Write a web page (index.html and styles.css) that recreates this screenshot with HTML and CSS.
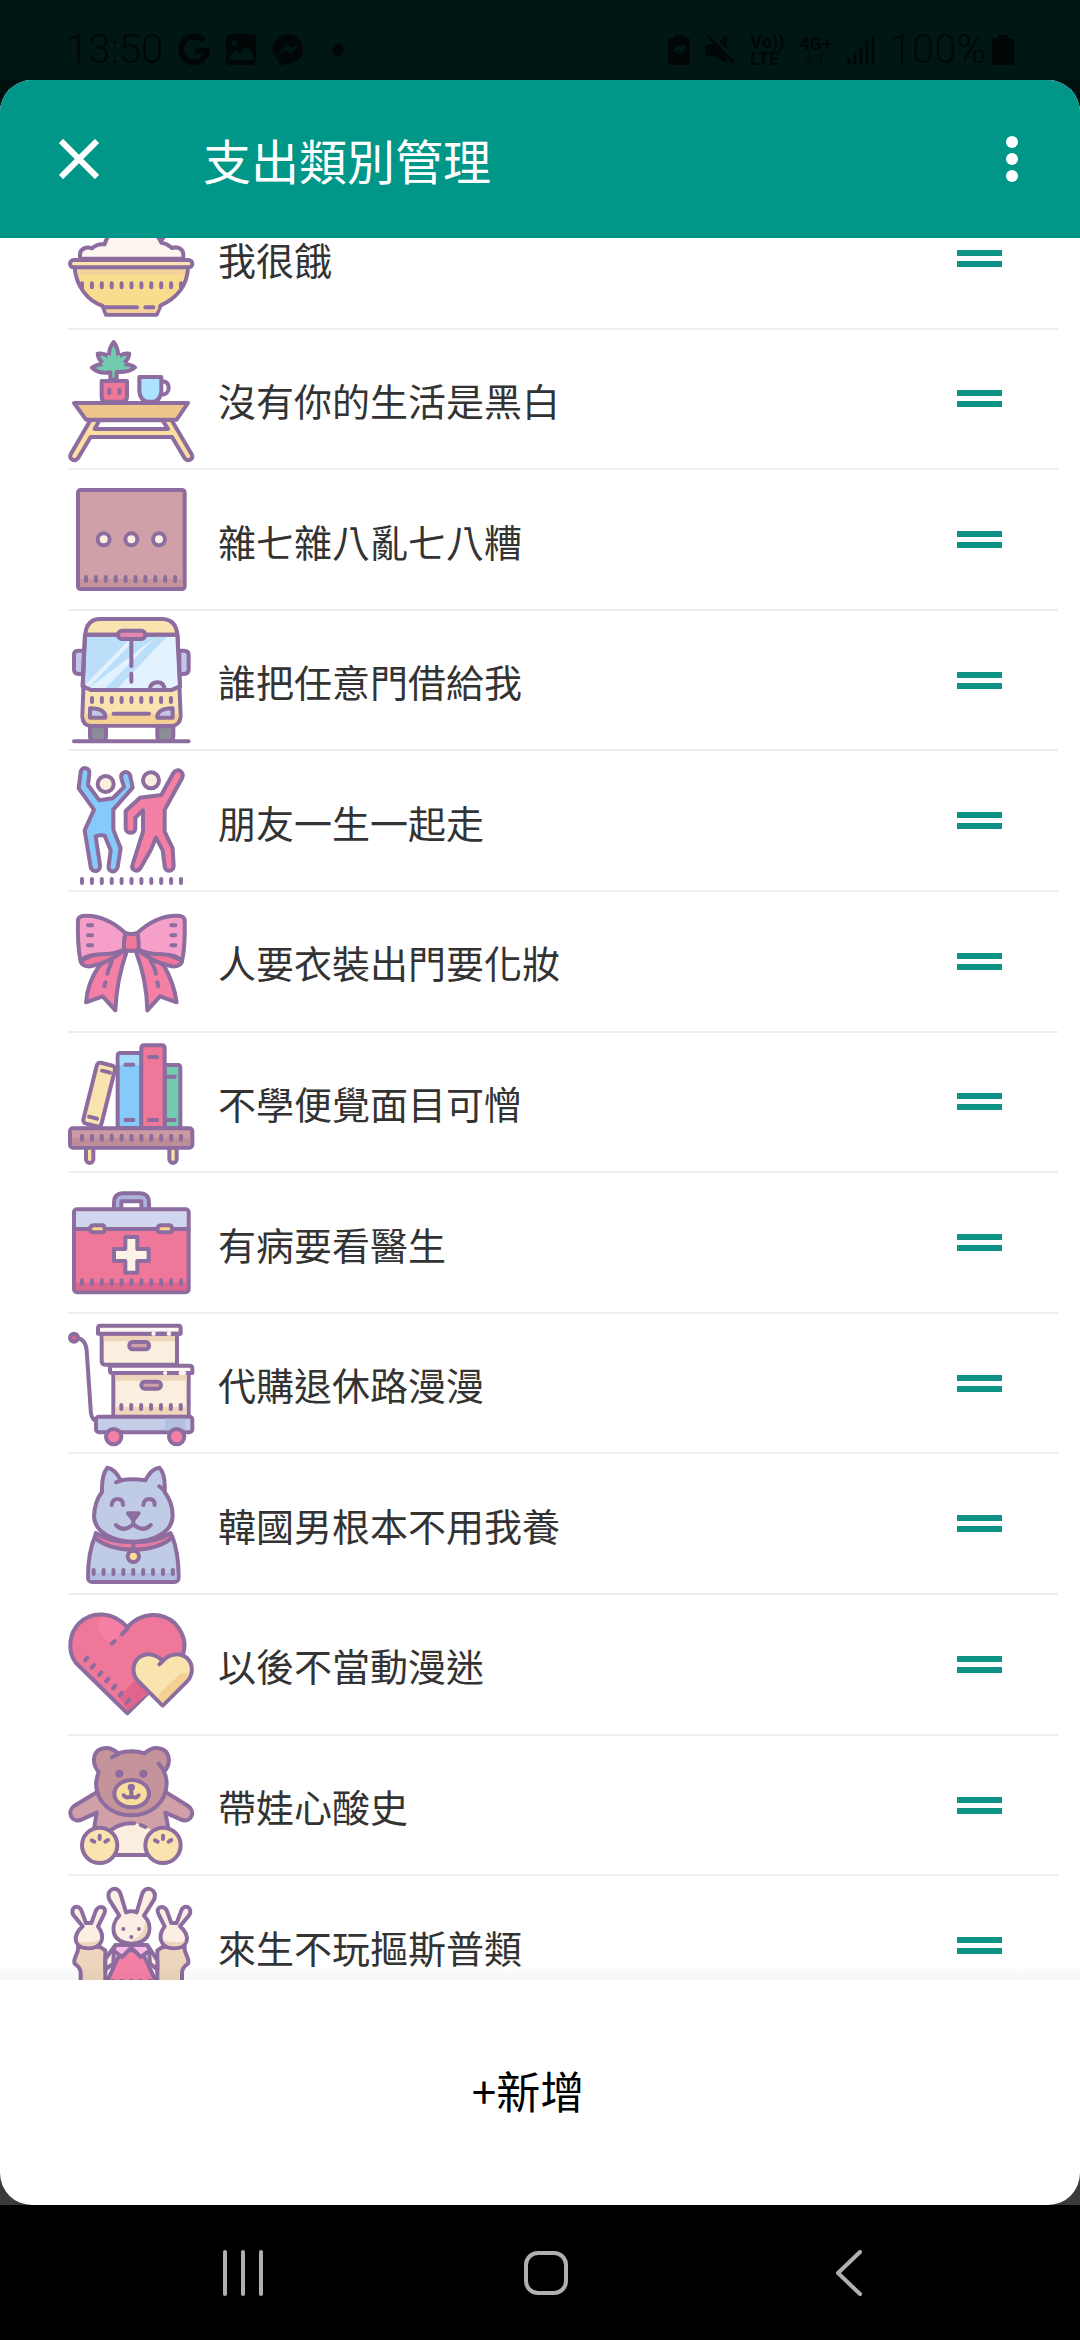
FILE: index.html
```html
<!DOCTYPE html>
<html lang="zh-Hant">
<head>
<meta charset="utf-8">
<meta name="viewport" content="width=device-width, initial-scale=1">
<title>支出類別管理</title>
<link rel="stylesheet" href="styles.css">
</head>
<body>
<div class="status">
  <div class="status-group">
    <span class="clock">13:50</span>
    <svg class="status-icon" width="32" height="34" viewBox="0 0 32 34"><path d="M26 8A13 13 0 1 0 29 18H17" fill="none" stroke="currentColor" stroke-width="6"/></svg>
    <svg class="status-icon" width="32" height="34" viewBox="0 0 32 34"><path fill="currentColor" fill-rule="evenodd" d="M5 1h22q4 0 4 4v23q0 4-4 4H5q-4 0-4-4V5q0-4 4-4zM9 7a3 3 0 1 0 1 0zM4 24v3h24v-7l-7-7-7 8-4-4z"/></svg>
    <svg class="status-icon" width="34" height="34" viewBox="0 0 34 34"><path fill="currentColor" fill-rule="evenodd" d="M17 1a16 15 0 1 1-4 30l-6 2v-5A16 15 0 0 1 17 1zM6 21l9-10 5 4 8-4-9 10-5-4z"/></svg>
    <svg class="status-icon" width="34" height="34" viewBox="0 0 34 34"><circle cx="17" cy="17" r="6" fill="currentColor"/></svg>
  </div>
  <div class="status-group">
    <svg class="status-icon" width="22" height="32" viewBox="0 0 22 32"><path fill="currentColor" fill-rule="evenodd" d="M6 4V1h10v3h3q3 0 3 3v21q0 3-3 3H3q-3 0-3-3V7q0-3 3-3zM4 24l5-4q8 1 9-9-13 0-13 8l8-3z"/></svg>
    <svg class="status-icon" width="30" height="32" viewBox="0 0 30 32"><path fill="currentColor" d="M0 13q0-2 3-3h6L22 23v7L9 22H3q-3-1-3-3zM14 8l8-7v14z"/><path d="M3 2l26 27" stroke="currentColor" stroke-width="3"/></svg>
    <span class="network">Vo))<br>LTE</span>
    <span class="network">4G+<br><svg class="faint" width="32" height="14" viewBox="0 0 32 14"><path d="M10 0v12M5 7l5 5 5-5M22 13V1M17 6l5-5 5 5" fill="none" stroke="currentColor" stroke-width="2"/></svg></span>
    <svg class="status-icon" width="28" height="32" viewBox="0 0 28 32"><path d="M2 24v6M8 19v11M14 13v17M20 7v23M26 2v28" stroke="currentColor" stroke-width="3"/></svg>
    <span class="charge">100%<svg class="status-icon" width="22" height="32" viewBox="0 0 22 32"><path fill="currentColor" d="M6 4V1h10v3h3q3 0 3 3v21q0 3-3 3H3q-3 0-3-3V7q0-3 3-3z"/></svg></span>
  </div>
</div>
<main class="stage">
<section class="sheet">
  <header class="bar">
    <button class="icon-button" aria-label="關閉"><svg width="40" height="40" viewBox="0 0 40 40"><path d="M2 2l36 36M38 2L2 38" stroke="currentColor" stroke-width="6"/></svg></button>
    <h1 class="title">支出類別管理</h1>
    <button class="icon-button" aria-label="更多"><svg width="12" height="46" viewBox="0 0 12 46" fill="currentColor"><circle cx="6" cy="6" r="6"/><circle cx="6" cy="23" r="6"/><circle cx="6" cy="40" r="6"/></svg></button>
  </header>
  <div class="viewport">
  <ul class="list">
    <li class="row">
      <svg class="pic" viewBox="54 -103 378 378"><path fill="#fef5f0" d="M90 88V76C90 58 110 50 126 57C138 45 150 43 164 45C170 20 200-20 243-20S320 10 334 40Q350 42 366 56C384 50 400 60 400 76V88z"/><path fill="#8d6c9f" stroke="none" d="M322 22h28l-12 16z"/><path fill="#f9dd8f" d="M74 114C78 170 112 214 158 230L168 256H320L332 228C378 208 412 170 414 114z"/><path stroke="none" fill="#f5d19c" d="M80 118H408L402 137H84zM164 234H326L318 250H172z"/><rect x="60" y="92" width="367" height="22" rx="11" fill="#fde1ae"/><path d="M96 162v12m29.7-12v12m29.7-12v12m29.7-12v12m29.7-12v12m29.7-12v12m29.7-12v12m29.7-12v12m29.7-12v12m29.7-12v12m29.7-12v12M164 234h97M286 234h24"/></svg>
      <span class="name">我很餓</span><button class="grip" aria-label="拖曳排序"></button>
    </li>
    <li class="row">
      <svg class="pic" viewBox="54 319 378 378"><path fill="#72caaf" d="M181 450V428C160 432 140 427 126 414Q144 402 162 403Q144 390 143 372Q164 370 177 382Q175 356 191 337Q206 356 204 382Q218 370 238 372Q236 390 219 403Q238 402 255 413Q240 428 200 427V450z"/><path d="M177 382l14 30 14-30M162 403l29 12 28-12" stroke="#72caaf"/><path fill="#ef7799" d="M155 454h76v48q-1 13-14 14h-48q-14-1-14-14z"/><path d="M178 480v10M208 480v10"/><path fill="#ace3ff" d="M268 442h66v42q-2 28-24 32h-18q-22-4-24-32z"/><path d="M336 455c14 0 20 8 20 20s-8 20-20 20"/><path fill="#fcdea0" fill-rule="evenodd" d="M122 570L62 674C55 688 74 698 84 686L122 622H366L404 686C414 698 432 688 425 674L364 570zM148 572L134 598H354L338 572z"/><path fill="#eec68c" d="M72 520h342l-34 50H108z"/></svg>
      <span class="name">沒有你的生活是黑白</span><button class="grip" aria-label="拖曳排序"></button>
    </li>
    <li class="row">
      <svg class="pic" viewBox="54 21 378 378"><rect x="84" y="60" width="320" height="297" rx="8" fill="#cfa0a7"/><path stroke="none" fill="#c5939a" d="M90 328h308v23H90z"/><g fill="#faefe2"><circle cx="161" cy="208" r="18"/><circle cx="244" cy="208" r="18"/><circle cx="327" cy="208" r="18"/></g><path d="M108 321v12m29.7-12v12m29.7-12v12m29.7-12v12m29.7-12v12m29.7-12v12m29.7-12v12m29.7-12v12m29.7-12v12m29.7-12v12"/></svg>
      <span class="name">雜七雜八亂七八糟</span><button class="grip" aria-label="拖曳排序"></button>
    </li>
    <li class="row">
      <svg class="pic" viewBox="54 442 378 378"><path fill="#8d8d99" d="M120 770h48v30q0 14-14 14h-20q-14 0-14-14zM322 770h48v30q0 14-14 14h-20q-14 0-14-14z"/><path fill="#c3c6e8" d="M102 543H84q-12 0-12 12v44q0 14 14 14h14zM388 543h14q14 0 14 12v44q0 14-14 14h-14z"/><path fill="#f9e3ae" d="M106 495C108 465 122 448 152 448H338Q378 450 382 495L392 740Q390 766 366 768H122Q98 766 97 740z"/><path stroke="none" fill="#f5d093" d="M102 732h284q-2 30-20 30H122q-18 0-20-30z"/><path fill="#bbdef9" d="M105 495H382L390 650L364 661H124L98 650z"/><path stroke="none" fill="#e3f2ff" d="M318 501h12L170 656h-54zM350 501h28l6 146-20 8H204z"/><path stroke="none" fill="#bbdef9" d="M318 501h30L195 656h-30z"/><path stroke="#e3f2ff" d="M114 646L244 512"/><path d="M105 495H382L390 650L364 661H124L98 650z"/><path d="M244 510v79M244 612v24"/><path fill="#ddd8f2" d="M298 661q4-23 24-23t22 23z"/><rect x="204" y="483" width="82" height="25" rx="12" fill="#e388ad"/><path fill="#c3c6e8" d="M120 716q48 0 46 28h-46zM368 716q-48 0-46 28h46z"/><path d="M191 732h106M126 685v12m29.6-12v12m29.6-12v12m29.6-12v12m29.6-12v12m29.6-12v12m29.6-12v12m29.6-12v12m29.6-12v12M72 815h344"/></svg>
      <span class="name">誰把任意門借給我</span><button class="grip" aria-label="拖曳排序"></button>
    </li>
    <li class="row">
      <svg class="pic" viewBox="54 23 378 378"><circle cx="167" cy="101" r="24" fill="#faefde"/><circle cx="303" cy="90" r="24" fill="#faefde"/><path fill="#85caf8" d="M92 64C96 48 120 50 118 70L114 104L148 150L188 144L222 110L214 84C210 66 232 58 240 74L248 112L190 178V238L212 294L203 350C198 370 172 366 176 346L182 300L164 256Q150 252 137 258L150 344C152 366 126 368 122 350L104 240L132 178L86 114z"/><path fill="#f480a5" d="M270 142L334 134L370 68C384 50 404 66 396 84L344 178V244L368 294L371 346C371 366 345 366 344 348L338 300L318 262L302 300L272 352C262 368 242 360 248 342L279 244V180L256 202V234C256 252 228 252 227 234V182z"/><path d="M96 386v12m29.7-12v12m29.7-12v12m29.7-12v12m29.7-12v12m29.7-12v12m29.7-12v12m29.7-12v12m29.7-12v12m29.7-12v12m29.7-12v12"/></svg>
      <span class="name">朋友一生一起走</span><button class="grip" aria-label="拖曳排序"></button>
    </li>
    <li class="row">
      <svg class="pic" viewBox="54 445 378 378"><path fill="#f480a5" d="M148 648Q112 700 108 758L158 740L196 782Q200 690 230 606L210 600zM342 648Q372 700 380 758L330 740L292 782Q290 690 258 606L278 600z"/><path fill="#ef7799" d="M92 632Q94 652 122 650Q176 640 222 602L150 608zM396 632Q394 652 366 650Q312 640 266 602L338 608z"/><path fill="#f6a0c9" d="M84 510Q86 498 108 498C158 498 196 522 226 550V598Q200 614 150 614Q100 618 92 636Q82 590 84 510zM404 510Q402 498 380 498C330 498 292 522 262 550V598Q288 614 338 614Q388 618 396 636Q406 590 404 510z"/><path fill="#ef7799" d="M226 550q18 6 36 0q6 25 4 50q-22 8-44 0q-2-25 4-50z"/><path d="M186 634q-10 22-14 38M302 634q12 18 16 38M166 698l-3 12M322 698l3 12M114 527h12M114 557h12M114 587h12M364 527h12M364 557h12M364 587h12"/></svg>
      <span class="name">人要衣裝出門要化妝</span><button class="grip" aria-label="拖曳排序"></button>
    </li>
    <li class="row">
      <svg class="pic" viewBox="54 27 378 378"><g fill="#fcdea0"><path d="M108 352h22v36a11 11 0 0 1-22 0zM358 352h22v36a11 11 0 0 1-22 0z"/></g><rect x="0" y="0" width="56" height="188" rx="10" fill="#f9e3ae" transform="translate(143 96) rotate(14)"/><path fill="#72caaf" d="M344 105h40q7 0 7 9v180h-47z"/><path fill="#85caf8" d="M203 294V78q0-9 9-9h62v225z"/><path stroke="none" fill="#a4dbfb" d="M209 75h59v30h-59z"/><path fill="#ef7799" d="M274 294V55q0-9 9-9h52q9 0 9 9v239z"/><path d="M226 104h24M226 270h24M297 81h24M297 270h24M350 140h24M350 270h24M156 122l24 6M117 260l24 6"/><rect x="60" y="295" width="367" height="58" rx="9" fill="#cb9aa3"/><path stroke="none" fill="#bd8d98" d="M66 325h355v22H66z"/><path d="M96 317v12m29.7-12v12m29.7-12v12m29.7-12v12m29.7-12v12m29.7-12v12m29.7-12v12m29.7-12v12m29.7-12v12m29.7-12v12m29.7-12v12"/></svg>
      <span class="name">不學便覺面目可憎</span><button class="grip" aria-label="拖曳排序"></button>
    </li>
    <li class="row">
      <svg class="pic" viewBox="54 449 378 378"><path fill="#aeb3dc" fill-rule="evenodd" d="M192 538V518Q192 489 220 489H268Q297 489 297 518V538zM214 538V513H274V538z"/><rect x="72" y="537" width="344" height="249" rx="9" fill="#ef7799"/><path stroke="none" fill="#cfd6ed" d="M78 543h332v52H78z"/><path stroke="none" fill="#de6490" d="M78 757h332v23H78z"/><path d="M72 596h344"/><path fill="#fbd58b" d="M132 585h24q8 0 8 11t-8 10h-24q-12 0-12-10t12-11zM334 585h24q8 0 8 11t-8 10h-24q-12 0-12-10t12-11z"/><path fill="#faf3e6" d="M226 620h36v36h34v36h-34v35h-36v-35h-34v-36h34z"/><path d="M96 750v12m29.7-12v12m29.7-12v12m29.7-12v12m29.7-12v12m29.7-12v12m29.7-12v12m29.7-12v12m29.7-12v12m29.7-12v12m29.7-12v12"/></svg>
      <span class="name">有病要看醫生</span><button class="grip" aria-label="拖曳排序"></button>
    </li>
    <li class="row">
      <svg class="pic" viewBox="54 31 378 378"><path d="M76 86C96 84 108 98 110 122L122 300Q122 326 138 334"/><circle cx="72" cy="84" r="12" fill="#e0648c"/><path fill="#faefde" d="M155 72h226v93H166q-11 0-11-11zM190 190h226v130H190z"/><path stroke="none" fill="#efd5bb" d="M161 78h214v17H161zM196 196h214v17H196zM196 292h214v24H196z"/><path fill="#fef7f3" d="M144 55q0-7 7-7h234q7 0 7 7v17H144zM180 174q0-6 7-6h232q8 0 8 8v14H186q-6 0-6-6z"/><path stroke="#fef7f3" d="M310 72h2M356 72h3M345 190h1M391 190h12"/><path d="M322 72h22M368 72h20M358 190h22"/><rect x="238" y="97" width="59" height="22" rx="10" fill="#cfa0a7"/><rect x="274" y="216" width="59" height="21" rx="10" fill="#cfa0a7"/><path d="M214 286v12m29.7-12v12m29.7-12v12m29.7-12v12m29.7-12v12m29.7-12v12m29.7-12v12"/><rect x="138" y="321" width="289" height="47" rx="9" fill="#c3cde7"/><path stroke="none" fill="#b3c0e0" d="M345 327h62v35h-62z"/><g fill="#f480a5"><circle cx="191" cy="381" r="23"/><circle cx="380" cy="381" r="23"/></g></svg>
      <span class="name">代購退休路漫漫</span><button class="grip" aria-label="拖曳排序"></button>
    </li>
    <li class="row">
      <svg class="pic" viewBox="54 452 378 378"><path fill="#c0cbe6" d="M136 676Q114 726 114 800Q114 815 128 815H372Q386 815 386 800Q386 726 366 676z"/><path stroke="none" fill="#b0bce0" d="M120 788h260v20H120z"/><path fill="#c0cbe6" d="M156 545C155 510 162 484 172 472C190 474 202 490 212 510Q248 504 286 510C296 490 310 474 328 472C340 484 346 510 344 545Q368 576 368 618C366 666 310 694 250 694S134 666 132 618Q134 572 156 545z"/><path fill="#e87ba2" d="M137 668Q180 696 250 696T362 668L364 684Q320 718 250 718T136 684z"/><path d="M198 516l16-6M328 528l14 12M185 584q2-18 18-18t16 18M280 584q2-18 18-18t16 18M250 622v20M198 644q24 24 52-2q28 26 52 2M250 700v20"/><path fill="#ef7799" d="M234 609h32l-16 20z"/><circle cx="250" cy="738" r="17" fill="#fcdc93"/><path d="M131 779v12m29.7-12v12m29.7-12v12m29.7-12v12m29.7-12v12m29.7-12v12m29.7-12v12m29.7-12v12m29.7-12v12"/></svg>
      <span class="name">韓國男根本不用我養</span><button class="grip" aria-label="拖曳排序"></button>
    </li>
    <li class="row">
      <svg class="pic" viewBox="54 34 378 378"><path fill="#ef7799" d="M232 371L78 220C50 184 58 130 88 100C128 62 190 66 232 112C276 66 336 66 374 100C410 140 412 182 384 222z"/><path stroke="none" fill="#f480a5" d="M164 84Q196 82 226 118L182 160C150 140 126 96 164 84z"/><path stroke="none" fill="#e0648c" d="M206 322L262 264L296 310L232 364z"/><path d="M232 116l-16 18M194 154l-8 8M112 204l-7 8M132 226l-7 8M154 248l-7 8M175 267l-7 8M196 288l-7 8M216 309l-7 8M238 330l-7 8"/><path fill="#f9e3ae" d="M338 348L264 274C246 254 246 224 264 206C286 188 316 190 338 214C360 190 390 188 412 206C430 224 430 254 412 274z"/><path stroke="none" fill="#f5d093" d="M326 314L392 252L414 250Q418 262 406 272L338 340L326 326z"/><path d="M338 214l-10 10"/></svg>
      <span class="name">以後不當動漫迷</span><button class="grip" aria-label="拖曳排序"></button>
    </li>
    <li class="row">
      <svg class="pic" viewBox="54 456 378 378"><path fill="#cfa0a7" d="M138 608L72 648C48 666 66 702 96 688L140 668L130 730V795H358V730L346 668L392 688C422 702 440 666 414 648L350 608z"/><path fill="#faefde" stroke="none" d="M166 795V738Q196 700 244 700T322 738V795z"/><path d="M186 718Q214 698 252 700M272 705l14 6M180 795H306"/><g fill="#c5939a"><path d="M146 546C124 520 130 488 150 478Q178 466 204 490Q244 478 284 490Q310 466 338 478C360 490 364 520 342 546Q350 560 350 582C348 640 300 676 244 676S140 640 138 582Q140 560 146 546z"/></g><path d="M186 502l20-10M326 521l16 20"/><ellipse cx="245" cy="611" rx="52" ry="41" fill="#f9dd9c"/><g fill="#8d6c9f" stroke="none"><circle cx="208" cy="551" r="12"/><circle cx="280" cy="551" r="12"/><circle cx="244" cy="592" r="11"/></g><path d="M244 594v24M221 616q10 12 23 2q13 10 22-2"/><g fill="#f9e3ae"><circle cx="149" cy="766" r="53"/><circle cx="339" cy="766" r="53"/></g><path d="M149 737v10M125 751l8 4M174 750l-8 5M339 737v10M315 751l8 4M364 750l-8 5"/></svg>
      <span class="name">帶娃心酸史</span><button class="grip" aria-label="拖曳排序"></button>
    </li>
    <li class="row">
      <svg class="pic" viewBox="54 458 378 378"><g id="side-rabbit"><path fill="#edd6bd" d="M84 650C88 670 66 684 74 700Q92 712 92 728V836H166V660L150 650z"/><path fill="#faefe2" d="M98 588L70 554C58 530 86 520 94 540L108 578H124L138 540C148 522 174 530 162 552L144 588C168 620 156 654 116 654S62 620 98 588z"/><path stroke="none" fill="#edd6bd" d="M82 632Q116 640 148 630Q140 648 116 648T82 632z"/></g><use href="#side-rabbit" transform="translate(488 0) scale(-1 1)"/><path fill="#faefe2" d="M192 650L166 686V718L190 700zM296 650L322 690V718L300 700z"/><path fill="#f480a5" d="M214 660L150 800V836H340V800L274 660z"/><path fill="#f9b9e6" d="M196 644L190 660L216 680L240 656H248L272 680L300 660L292 644z"/><path fill="#faefe2" d="M208 556L178 508C164 476 204 462 212 492L228 546Q244 540 260 546L276 492C284 462 326 476 312 508L282 556C308 584 308 636 244 640C180 636 180 584 208 556z"/><path stroke="none" fill="#edd6bd" d="M286 570C306 610 280 634 236 634Q284 620 286 570z"/><g fill="#8d6c9f" stroke="none"><circle cx="220" cy="596" r="6"/><circle cx="267" cy="596" r="6"/><circle cx="244" cy="620" r="6"/></g><path d="M188 751v12m28-12v12m28-12v12m28-12v12m28-12v12"/></svg>
      <span class="name">來生不玩摳斯普類</span><button class="grip" aria-label="拖曳排序"></button>
    </li>
  </ul>
  </div>
  <button class="add">+新增</button>
</section>
</main>
<nav class="nav">
  <button class="nav-button" aria-label="最近使用"><svg width="44" height="46" viewBox="0 0 44 46"><path d="M4 2v42M22 2v42M40 2v42"/></svg></button>
  <button class="nav-button" aria-label="主畫面"><svg width="44" height="46" viewBox="0 0 44 46"><rect x="2" y="3" width="40" height="40" rx="12"/></svg></button>
  <button class="nav-button" aria-label="返回"><svg width="44" height="46" viewBox="0 0 44 46"><path d="M33 2L11 23l22 21"/></svg></button>
</nav>
</body>
</html>
```
FILE: styles.css
```css
* { box-sizing: border-box; }

body {
  margin: 0;
  height: 100vh;
  display: flex;
  flex-direction: column;
  background: #000;
  font-family: "Noto Sans CJK TC", sans-serif;
}

button {
  padding: 0;
  border: 0;
  background: none;
  color: inherit;
  font: inherit;
  cursor: pointer;
}

/* status bar */
.status {
  height: 80px;
  padding: 20px 66px 0 66px;
  display: flex;
  justify-content: space-between;
  background: #001714;
  color: #000706;
  font-family: Roboto, sans-serif;
}

.status-group {
  height: 60px;
  display: flex;
  align-items: center;
  gap: 15px;
}

.clock,
.charge {
  font-size: 40px;
  line-height: 60px;
  font-weight: 300;
}

.charge {
  display: flex;
  align-items: center;
  gap: 6px;
}

.network {
  font-size: 18px;
  line-height: 17px;
  font-weight: 700;
}

.faint {
  display: block;
  opacity: 0.4;
}

/* sheet */
.stage {
  flex: 1;
  min-height: 0;
  display: flex;
  flex-direction: column;
  background: linear-gradient(#00100e 50%, #3a3a3a 50%);
}

.sheet {
  flex: 1;
  min-height: 0;
  display: flex;
  flex-direction: column;
  overflow: hidden;
  border-radius: 32px;
  background: #fff;
}

.bar {
  height: 158px;
  padding: 0 62px 0 59px;
  display: flex;
  align-items: center;
  gap: 104px;
  background: #009688;
  color: #fff;
}

.title {
  flex: 1;
  margin: 0;
  font-size: 48px;
  line-height: 72px;
  font-weight: 400;
}

.icon-button { display: flex; }

/* category list, scrolled part of the way into its first row */
.viewport {
  position: relative;
  flex: 1;
  min-height: 0;
  display: flex;
  flex-direction: column;
  overflow: hidden;
}

.viewport::after {
  content: "";
  position: absolute;
  inset: auto 0 0 0;
  height: 16px;
  background: linear-gradient(rgba(0, 0, 0, 0), rgba(0, 0, 0, 0.04));
}

.list {
  flex: 1;
  margin: -49px 22px -37px 68px;
  padding: 0;
  display: flex;
  flex-direction: column;
  list-style: none;
}

.row {
  flex: 1;
  min-height: 140px;
  padding-right: 56px;
  display: flex;
  align-items: center;
  gap: 24px;
  border-bottom: 2px solid #eee;
}

.pic {
  width: 126px;
  height: 126px;
  overflow: visible;
  fill: none;
  stroke: #8d6c9f;
  stroke-width: 12;
  stroke-linecap: round;
  stroke-linejoin: round;
}

.name {
  flex: 1;
  padding-top: 2px;
  color: #333;
  font-size: 38px;
  line-height: 38px;
}

.grip {
  width: 45px;
  height: 17px;
  border: solid #0d9286;
  border-width: 6px 0;
}

.add {
  height: 225px;
  padding: 0 24px 6px 0;
  color: #000;
  font-size: 44px;
  line-height: 60px;
}

/* system navigation */
.nav {
  height: 135px;
  padding: 0 80px 0 92px;
  display: grid;
  grid-template-columns: repeat(3, 1fr);
}

.nav-button {
  display: flex;
  align-items: center;
  justify-content: center;
}

.nav-button svg {
  fill: none;
  stroke: #b0b0b0;
  stroke-width: 4;
  stroke-linecap: round;
  stroke-linejoin: round;
}
```
